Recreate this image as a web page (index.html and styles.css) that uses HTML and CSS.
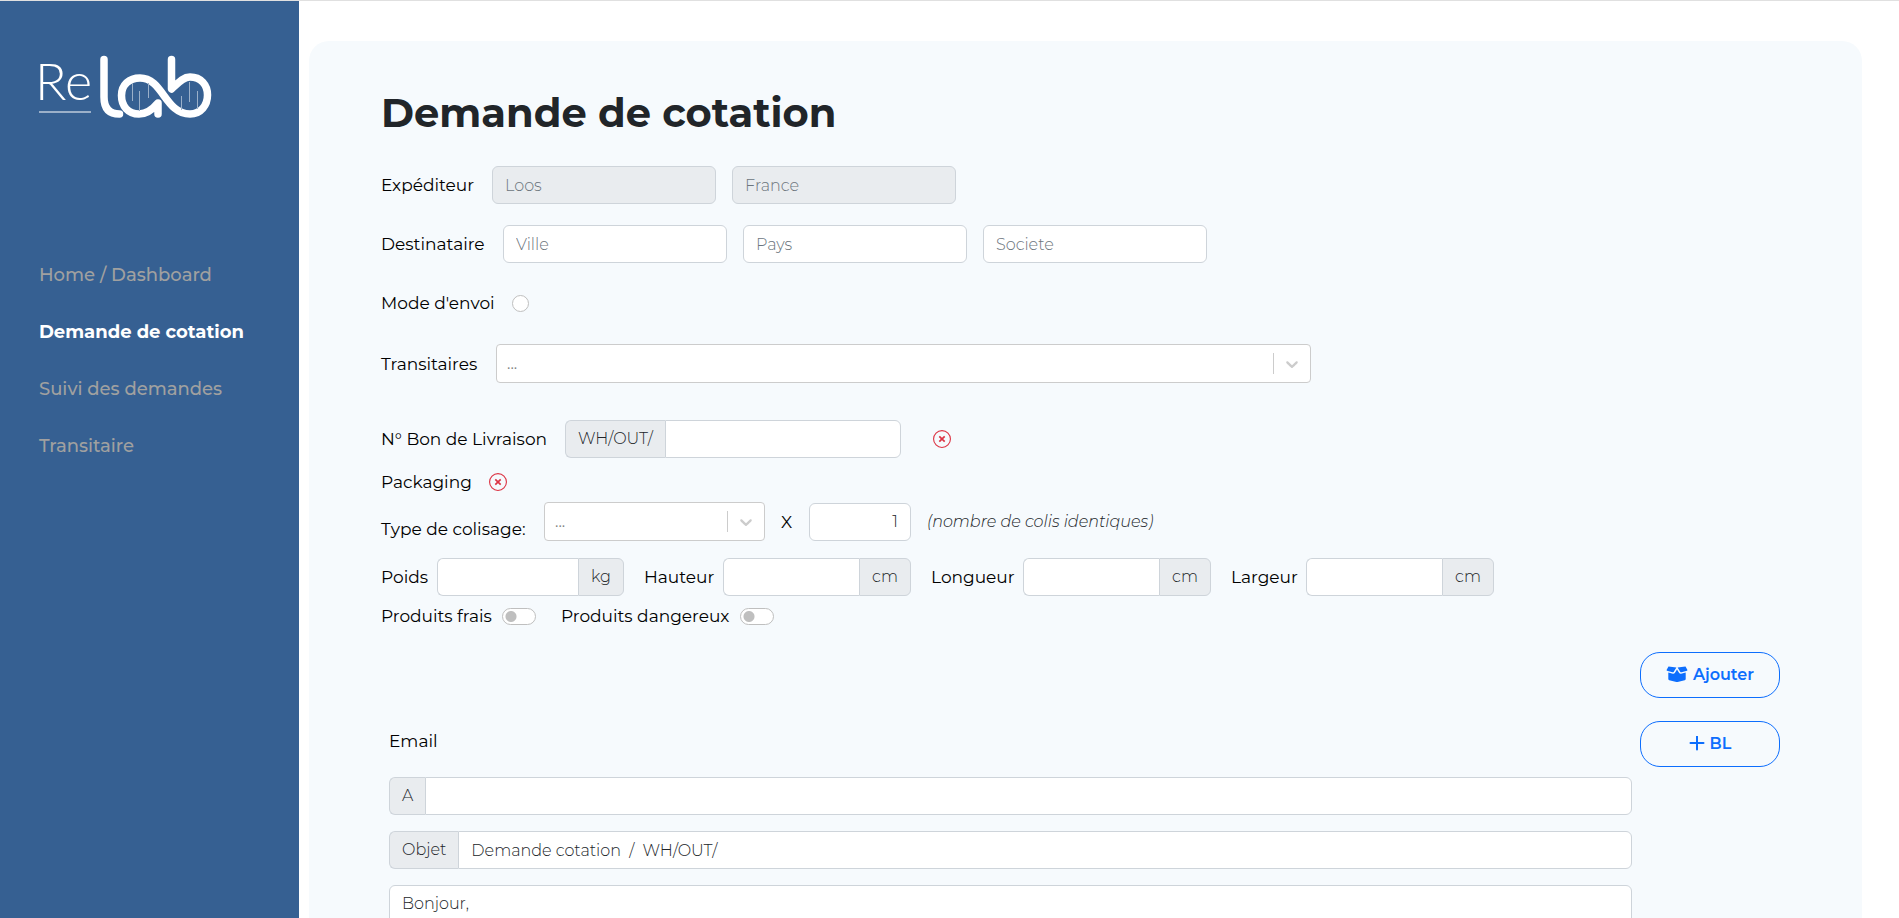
FILE: index.html
```html
<!DOCTYPE html>
<html lang="fr">
<head>
<meta charset="utf-8">
<title>Relab - Demande de cotation</title>
<link rel="stylesheet" href="styles.css">
</head>
<body>
<div class="app">
  <aside class="sidebar">
    <svg class="logo" width="176" height="72" viewBox="0 0 176 72" role="img" aria-label="Relab">
      <text class="logo-re" x="-4" y="51">Re</text>
      <path d="M0 63H52" stroke="#9bb0c9" stroke-width="2"/>
      <g fill="none" stroke="#fff" stroke-width="7.500" stroke-linecap="round" stroke-linejoin="round">
        <path d="M65 10.500V48Q65 65 80.500 65"/>
        <path d="M119 65V54C114 60 108 65 100 65C89 65 82.500 57 82.500 46.500C82.500 36 90 29 101 29C124 29 126 65 151 65C162 65 168.500 56 168.500 46C168.500 36 162 28 151 28C144 28 139 34 132.500 40V10.500"/>
      </g>
      <path d="M93.500 34V52M100.500 42V62M109.500 34V49M142.500 47V61M150.500 33V53M158.500 42V60" stroke="#9bb0c9" stroke-width="1"/>
    </svg>
    <nav class="menu">
      <a href="#">Home / Dashboard</a>
      <a href="#" class="active" aria-current="page">Demande de cotation</a>
      <a href="#">Suivi des demandes</a>
      <a href="#">Transitaire</a>
    </nav>
  </aside>
  <main class="panel">
    <h1>Demande de cotation</h1>
    <form>
      <div class="row">
        <label class="w-sender" for="from-city">Expéditeur</label>
        <input class="control place" id="from-city" placeholder="Loos" disabled>
        <input class="control place" aria-label="Pays expéditeur" placeholder="France" disabled>
      </div>
      <div class="row">
        <label class="w-recipient" for="to-city">Destinataire</label>
        <input class="control place" id="to-city" placeholder="Ville">
        <input class="control place" aria-label="Pays" placeholder="Pays">
        <input class="control place" aria-label="Societe" placeholder="Societe">
      </div>
      <div class="row row-mode">
        <label class="w-mode" for="mode">Mode d'envoi</label>
        <input type="radio" class="radio" id="mode">
      </div>
      <div class="row row-carriers">
        <label class="w-carriers" for="carriers">Transitaires</label>
        <span class="select carriers">
          <select id="carriers"><option>...</option></select>
          <svg width="20" height="20" viewBox="0 0 20 20"><path d="M4.516 7.548c0.436-0.446 1.043-0.481 1.576 0l3.908 3.747 3.908-3.747c0.533-0.481 1.141-0.446 1.574 0 0.436 0.445 0.408 1.197 0 1.615-0.406 0.418-4.695 4.502-4.695 4.502-0.217 0.223-0.502 0.335-0.787 0.335s-0.570-0.112-0.789-0.335c0 0-4.287-4.084-4.695-4.502s-0.436-1.170 0-1.615z"/></svg>
        </span>
      </div>
      <div class="row row-delivery">
        <label class="w-delivery" for="bl">N° Bon de Livraison</label>
        <span class="group delivery"><span class="addon">WH/OUT/</span><input class="control" id="bl"></span>
        <button type="button" class="remove remove-bl" aria-label="Supprimer le bon de livraison">
          <svg width="18" height="18" viewBox="0 0 16 16"><path d="M8 15A7 7 0 1 1 8 1a7 7 0 0 1 0 14zm0 1A8 8 0 1 0 8 0a8 8 0 0 0 0 16z"/><path d="M5.600 5.600L10.400 10.400M10.400 5.600L5.600 10.400" stroke="currentColor" stroke-width="1.500"/></svg>
        </button>
      </div>
      <div class="row row-packaging">
        <span class="label w-packaging">Packaging</span>
        <button type="button" class="remove" aria-label="Supprimer le packaging">
          <svg width="18" height="18" viewBox="0 0 16 16"><path d="M8 15A7 7 0 1 1 8 1a7 7 0 0 1 0 14zm0 1A8 8 0 1 0 8 0a8 8 0 0 0 0 16z"/><path d="M5.600 5.600L10.400 10.400M10.400 5.600L5.600 10.400" stroke="currentColor" stroke-width="1.500"/></svg>
        </button>
      </div>
      <div class="row row-type">
        <label class="w-type" for="type">Type de colisage:</label>
        <span class="select type">
          <select id="type"><option>...</option></select>
          <svg width="20" height="20" viewBox="0 0 20 20"><path d="M4.516 7.548c0.436-0.446 1.043-0.481 1.576 0l3.908 3.747 3.908-3.747c0.533-0.481 1.141-0.446 1.574 0 0.436 0.445 0.408 1.197 0 1.615-0.406 0.418-4.695 4.502-4.695 4.502-0.217 0.223-0.502 0.335-0.787 0.335s-0.570-0.112-0.789-0.335c0 0-4.287-4.084-4.695-4.502s-0.436-1.170 0-1.615z"/></svg>
        </span>
        <span class="label w-times">X</span>
        <input class="control count" aria-label="Nombre de colis identiques" value="1">
        <em class="hint">(nombre de colis identiques)</em>
      </div>
      <div class="row row-sizes">
        <div class="measure"><label class="w-weight" for="poids">Poids</label><span class="group"><input class="control" id="poids"><span class="addon">kg</span></span></div>
        <div class="measure"><label class="w-height" for="hauteur">Hauteur</label><span class="group"><input class="control" id="hauteur"><span class="addon">cm</span></span></div>
        <div class="measure"><label class="w-length" for="longueur">Longueur</label><span class="group"><input class="control" id="longueur"><span class="addon">cm</span></span></div>
        <div class="measure"><label class="w-width" for="largeur">Largeur</label><span class="group"><input class="control" id="largeur"><span class="addon">cm</span></span></div>
      </div>
      <div class="row row-flags">
        <div class="measure"><label class="w-fresh" for="frais">Produits frais</label><input type="checkbox" class="switch" id="frais"></div>
        <div class="measure"><label class="w-danger" for="dangereux">Produits dangereux</label><input type="checkbox" class="switch" id="dangereux"></div>
      </div>
      <div class="bottom">
        <section class="email">
          <span class="label">Email</span>
          <span class="group"><label class="addon" for="mail-to">A</label><input class="control" id="mail-to"></span>
          <span class="group"><label class="addon" for="subject">Objet</label><input class="control" id="subject" value="Demande cotation  /  WH/OUT/"></span>
          <textarea class="control message" aria-label="Message" rows="8">Bonjour,</textarea>
        </section>
        <div class="actions">
          <button type="button" class="outline">
            <svg width="22" height="18" viewBox="0 0 22 18"><path d="M2.500 0.500L10.400 1.500L7.800 5.800Q7.300 6.500 6.500 6.300L1 4.800Q0.300 4.500 0.700 3.800ZM19.500 0.500L11.600 1.500L14.200 5.800Q14.700 6.500 15.500 6.300L21 4.800Q21.700 4.500 21.300 3.800ZM11 3.500L13.200 7.100Q13.900 8.100 15.100 7.800L19.700 6.500V13Q19.700 14 18.700 14.300L11.600 16Q11 16.100 10.400 16L3.300 14.300Q2.300 14 2.300 13V6.500L6.900 7.800Q8.100 8.100 8.800 7.100Z"/></svg>
            Ajouter
          </button>
          <button type="button" class="outline">
            <svg width="16" height="16" viewBox="0 0 16 16"><path d="M8 0.500V13.500M1.500 7H14.500" stroke="currentColor" stroke-width="2" stroke-linecap="round"/></svg>
            BL
          </button>
        </div>
      </div>
    </form>
  </main>
</div>
</body>
</html>
```
FILE: styles.css
```css
* { box-sizing: border-box; }
body {
  margin: 0;
  height: 100vh;
  overflow: hidden;
  background: #fff;
  color: #000;
  font-family: Montserrat, Inter, sans-serif;
  font-size: 17px;
  line-height: 24px;
}
.app { display: flex; height: 100%; border-top: 1px solid #e0e0e0; }
.sidebar { flex: 0 0 299px; padding: 48px 39px; background: #366092; }
.logo { display: block; overflow: visible; }
.logo-re { font-family: Lato, sans-serif; font-size: 52px; font-weight: 300; fill: #fff; }
.menu { display: flex; flex-direction: column; gap: 33px; margin-top: 142px; }
.menu a { color: #a0a0a0; font-size: 18px; font-weight: 500; text-decoration: none; white-space: nowrap; }
.menu a.active { color: #fff; font-weight: 700; }
.panel {
  flex: 1;
  min-width: 0;
  margin: 40px 37px 0 10px;
  padding: 48px 82px 0 72px;
  border-radius: 20px 20px 0 0;
  background: #f6fafd;
}
h1 { margin: 0 0 29px; font-size: 40px; line-height: 48px; font-weight: 700; color: #212529; }
.row { display: flex; align-items: center; gap: 16px; min-height: 38px; margin-bottom: 21px; }
label, .label { flex: none; white-space: nowrap; }
.w-sender { width: 95px; }
.w-recipient { width: 106px; }
.w-mode { width: 115px; }
.w-carriers { width: 99px; }
.w-delivery { width: 168px; }
.w-packaging { width: 92px; }
.w-type { width: 147px; }
.w-times { width: 12px; }
.w-weight { width: 48px; }
.w-height { width: 71px; }
.w-length { width: 84px; }
.w-width { width: 67px; }
.w-fresh { width: 113px; }
.w-danger { width: 171px; }
.control {
  height: 38px;
  min-width: 0;
  padding: 6px 12px;
  border: 1px solid #ced4da;
  border-radius: 6px;
  background: #fff;
  color: #212529;
  font: 300 16px/24px Montserrat, Inter, sans-serif;
}
.control::placeholder { color: #6c757d; opacity: 1; }
.control:disabled { background: #e9ecef; }
.place { width: 224px; }
.radio {
  appearance: none;
  width: 17px;
  height: 17px;
  margin: 0;
  border: 1px solid #bfbfbf;
  border-radius: 50%;
  background: #fff;
}
.select { position: relative; display: flex; height: 39px; }
.select select {
  appearance: none;
  width: 100%;
  padding: 0 10px;
  border: 1px solid #ccc;
  border-radius: 4px;
  background: #fff;
  color: #808080;
  font: 400 16px/24px Montserrat, Inter, sans-serif;
}
.select svg { position: absolute; right: 9px; top: 10px; fill: #ccc; pointer-events: none; }
.select::after { content: ""; position: absolute; right: 37px; top: 9px; bottom: 9px; width: 1px; background: #ccc; }
.carriers { width: 815px; }
.type { width: 221px; }
.row-mode { margin-bottom: 22px; }
.row-carriers { margin-bottom: 37px; }
.group { display: flex; }
.group .control { flex: 1; }
.addon {
  padding: 6px 12px;
  border: 1px solid #ced4da;
  background: #e9ecef;
  color: #212529;
  font-size: 16px;
  font-weight: 300;
}
.group > :first-child { border-radius: 6px 0 0 6px; border-right-width: 0; }
.group > :last-child { border-radius: 0 6px 6px 0; }
.delivery { width: 336px; }
.remove { display: flex; padding: 0; border: 0; background: none; color: #dc3545; }
.remove svg { fill: currentColor; }
.remove-bl { margin-left: 16px; }
.row-delivery { margin-bottom: 12px; }
.row-packaging { min-height: 24px; margin-bottom: 8px; }
.row-type { margin-bottom: 17px; }
.row-type > label { align-self: flex-end; }
.count { width: 102px; text-align: right; }
.hint { font-size: 16px; font-weight: 300; color: #212529; }
.row-sizes { gap: 20px; margin-bottom: 8px; }
.measure { display: flex; align-items: center; gap: 8px; }
.measure .group { width: 188px; }
.row-sizes .measure:first-child .group { width: 187px; }
.row-flags { gap: 25px; min-height: 24px; margin-bottom: 24px; }
.switch {
  appearance: none;
  width: 34px;
  height: 17px;
  margin: 0;
  border: 1px solid #bfbfbf;
  border-radius: 9px;
  background: radial-gradient(circle at 8px 50%, #bfbfbf 5px, #fff 6px);
}
.bottom { display: flex; align-items: flex-start; gap: 8px; }
.email { flex: 1; display: flex; flex-direction: column; gap: 16px; padding: 77px 0 0 8px; }
.email > .label { margin-bottom: 8px; }
.message { height: auto; resize: none; }
.actions { display: flex; flex-direction: column; gap: 23px; width: 140px; }
.outline {
  display: flex;
  align-items: center;
  justify-content: center;
  gap: 5px;
  height: 46px;
  border: 1px solid #0d6efd;
  border-radius: 20px;
  background: none;
  color: #0d6efd;
  font: 600 16px/24px Montserrat, Inter, sans-serif;
}
.outline svg { fill: currentColor; }
```
